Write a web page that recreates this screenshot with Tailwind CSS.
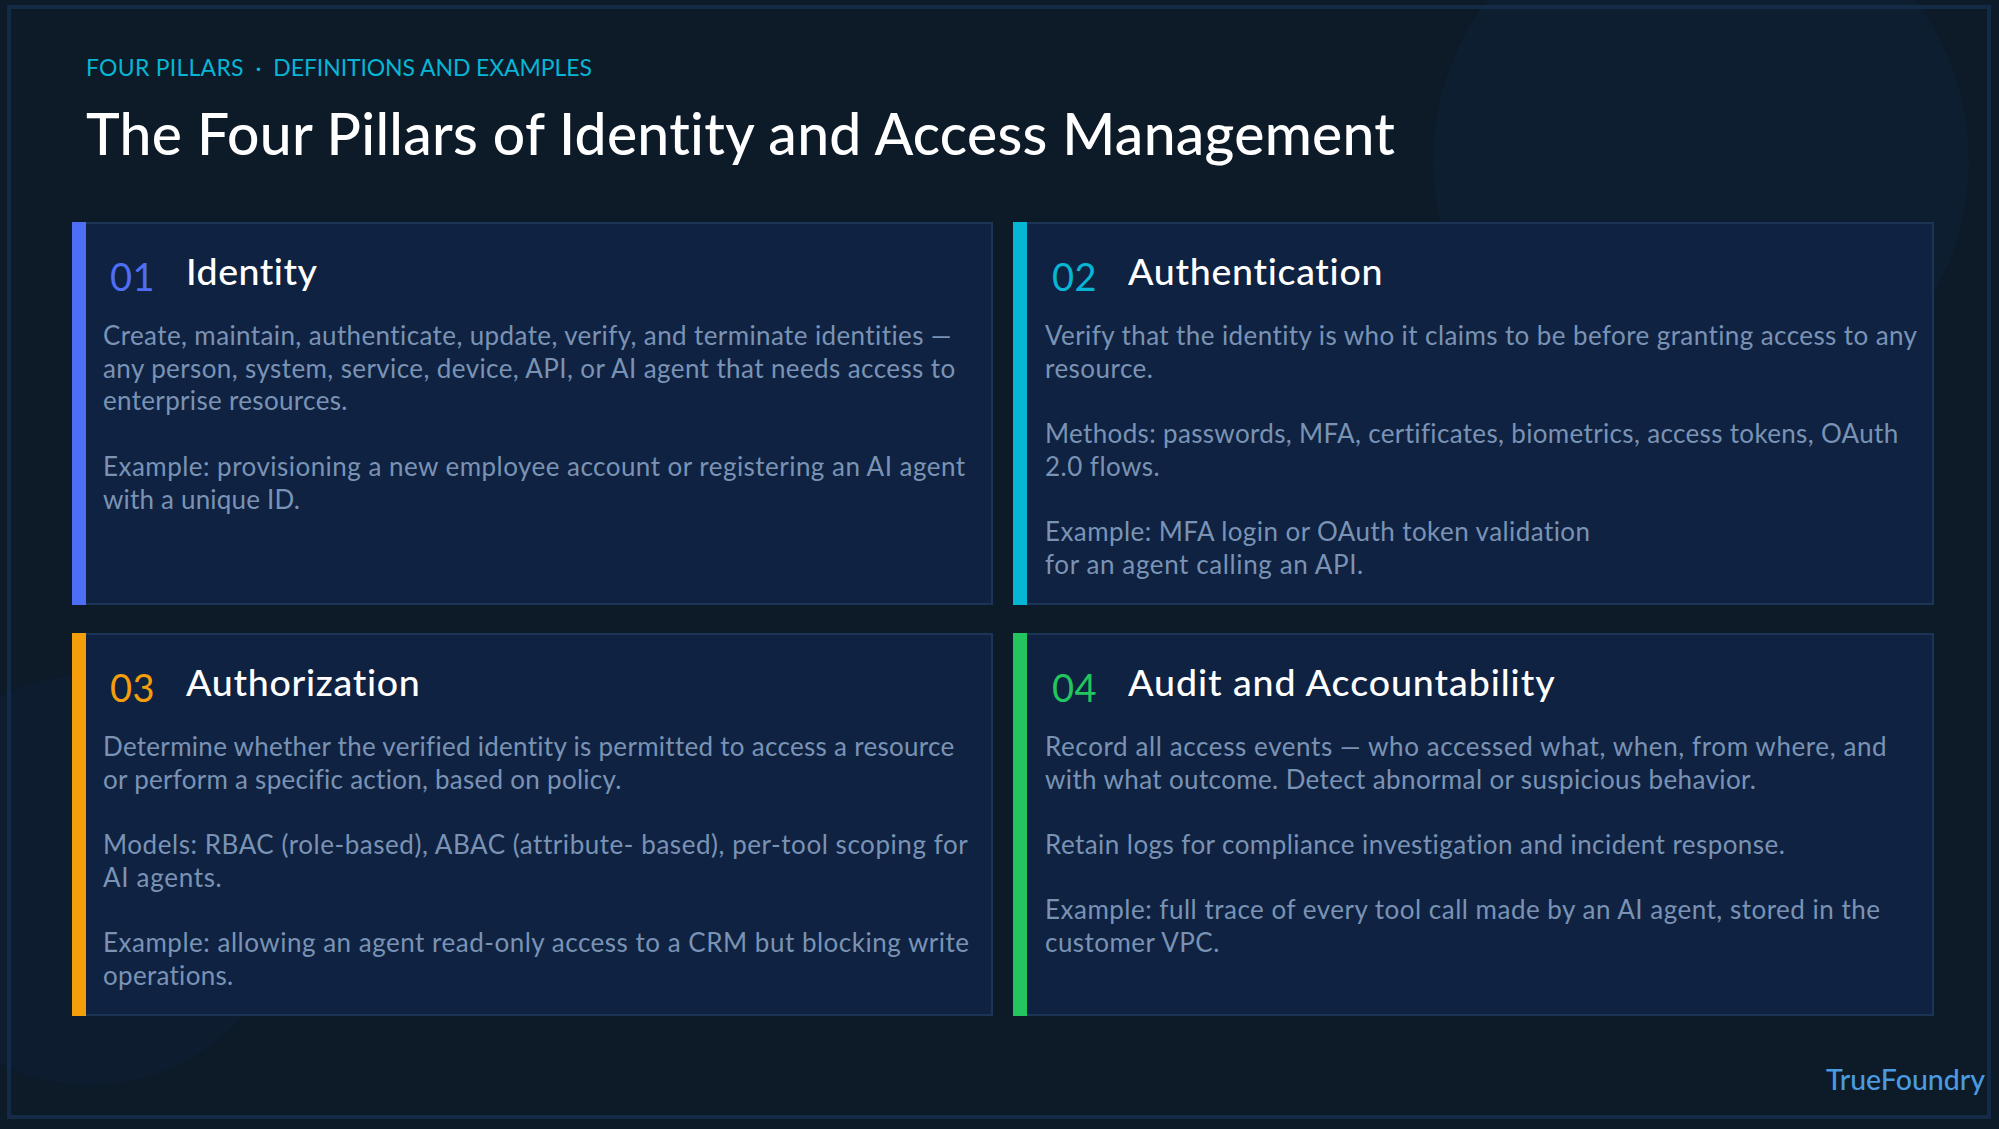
<!DOCTYPE html>
<html lang="en">
<head>
    <meta charset="UTF-8">
    <title>The Four Pillars of Identity and Access Management</title>
    <script src="https://cdn.jsdelivr.net/npm/@tailwindcss/browser@4"></script>
</head>
<body class="bg-[#0d1a28]">
    <div class="relative w-full h-screen overflow-hidden pt-[5px] pl-[7px] pr-[8px] pb-[10px] font-['Lato',sans-serif]">
        <!-- Background circles -->
        <div class="absolute left-[1433px] top-[-107px] w-[536px] h-[536px] rounded-full bg-[#0d1e30]"></div>
        <div class="absolute left-[-115px] top-[675px] w-[410px] h-[410px] rounded-full bg-[#0d1c2e]"></div>

        <!-- Slide frame -->
        <div class="relative h-full border-4 border-[#16304f]/80 flex flex-col">
            <header class="pl-[75px] pt-[42px] h-[213px]">
                <p class="text-[23px] leading-[32px] text-[#06b6d4] whitespace-nowrap"><span class="tracking-[0.25px]">FOUR PILLARS</span> &nbsp;·&nbsp; <span class="tracking-[-0.1px]">DEFINITIONS AND EXAMPLES</span></p>
                <h1 class="mt-[16px] text-[57px] leading-[68px] tracking-[0.3px] font-medium text-white whitespace-nowrap">The Four Pillars of Identity and Access Management</h1>
            </header>

            <!-- Pillar cards -->
            <main class="grid grid-cols-[921px_921px] grid-rows-[383px_383px] gap-x-[20px] gap-y-[28px] pl-[61px]">
                <section class="flex">
                    <div class="w-[14px] bg-[#4f6ef7]"></div>
                    <div class="flex-1 border-2 border-l-0 border-[#1c3557] bg-[#0f2241] pl-[17px] pt-[25px]">
                        <div class="flex items-start">
                            <span class="ml-[7px] mt-[5px] w-[76px] text-[38px] leading-[44px] tracking-[0.5px] text-[#4f6ef7]">01</span>
                            <h2 class="text-[37.5px] leading-[44px] tracking-[0.5px] font-medium text-white">Identity</h2>
                        </div>
                        <div class="mt-[21px] text-[26px] leading-[32.7px] text-[#7a93b5] whitespace-nowrap">
                            <p><span class="block tracking-[0.39px]">Create, maintain, authenticate, update, verify, and terminate identities —</span><span class="block tracking-[0.4px]">any person, system, service, device, API, or AI agent that needs access to</span><span class="block tracking-[0.33px]">enterprise resources.</span></p>
                            <p class="mt-[32.7px]"><span class="block tracking-[0.47px]">Example: provisioning a new employee account or registering an AI agent</span><span class="block tracking-[0.18px]">with a unique ID.</span></p>
                        </div>
                    </div>
                </section>

                <section class="flex">
                    <div class="w-[14px] bg-[#06b6d4]"></div>
                    <div class="flex-1 border-2 border-l-0 border-[#1c3557] bg-[#0f2241] pl-[18px] pt-[25px]">
                        <div class="flex items-start">
                            <span class="ml-[7px] mt-[5px] w-[76px] text-[38px] leading-[44px] tracking-[0.5px] text-[#06b6d4]">02</span>
                            <h2 class="text-[37.5px] leading-[44px] tracking-[0.7px] font-medium text-white">Authentication</h2>
                        </div>
                        <div class="mt-[21px] text-[26px] leading-[32.7px] text-[#7a93b5] whitespace-nowrap">
                            <p><span class="block tracking-[0.41px]">Verify that the identity is who it claims to be before granting access to any</span><span class="block tracking-[0.47px]">resource.</span></p>
                            <p class="mt-[32.7px]"><span class="block tracking-[0.34px]">Methods: passwords, MFA, certificates, biometrics, access tokens, OAuth</span><span class="block tracking-[0.47px]">2.0 flows.</span></p>
                            <p class="mt-[32.7px]"><span class="block tracking-[0.43px]">Example: MFA login or OAuth token validation</span><span class="block tracking-[0.61px]">for an agent calling an API.</span></p>
                        </div>
                    </div>
                </section>

                <section class="flex">
                    <div class="w-[14px] bg-[#f59e0b]"></div>
                    <div class="flex-1 border-2 border-l-0 border-[#1c3557] bg-[#0f2241] pl-[17px] pt-[25px]">
                        <div class="flex items-start">
                            <span class="ml-[7px] mt-[5px] w-[76px] text-[38px] leading-[44px] tracking-[0.5px] text-[#f59e0b]">03</span>
                            <h2 class="text-[37.5px] leading-[44px] tracking-[0.7px] font-medium text-white">Authorization</h2>
                        </div>
                        <div class="mt-[21px] text-[26px] leading-[32.7px] text-[#7a93b5] whitespace-nowrap">
                            <p><span class="block tracking-[0.29px]">Determine whether the verified identity is permitted to access a resource</span><span class="block tracking-[0.27px]">or perform a specific action, based on policy.</span></p>
                            <p class="mt-[32.7px]"><span class="block tracking-[0.55px]">Models: RBAC (role-based), ABAC (attribute- based), per-tool scoping for</span><span class="block tracking-[0.69px]">AI agents.</span></p>
                            <p class="mt-[32.7px]"><span class="block tracking-[0.51px]">Example: allowing an agent read-only access to a CRM but blocking write</span><span class="block tracking-[0.29px]">operations.</span></p>
                        </div>
                    </div>
                </section>

                <section class="flex">
                    <div class="w-[14px] bg-[#22c55e]"></div>
                    <div class="flex-1 border-2 border-l-0 border-[#1c3557] bg-[#0f2241] pl-[18px] pt-[25px]">
                        <div class="flex items-start">
                            <span class="ml-[7px] mt-[5px] w-[76px] text-[38px] leading-[44px] tracking-[0.5px] text-[#22c55e]">04</span>
                            <h2 class="text-[37.5px] leading-[44px] tracking-[0.93px] font-medium text-white">Audit and Accountability</h2>
                        </div>
                        <div class="mt-[21px] text-[26px] leading-[32.7px] text-[#7a93b5] whitespace-nowrap">
                            <p><span class="block tracking-[0.6px]">Record all access events — who accessed what, when, from where, and</span><span class="block tracking-[0.37px]">with what outcome. Detect abnormal or suspicious behavior.</span></p>
                            <p class="mt-[32.7px]"><span class="block tracking-[0.44px]">Retain logs for compliance investigation and incident response.</span></p>
                            <p class="mt-[32.7px]"><span class="block tracking-[0.5px]">Example: full trace of every tool call made by an AI agent, stored in the</span><span class="block tracking-[0.47px]">customer VPC.</span></p>
                        </div>
                    </div>
                </section>
            </main>

            <footer class="absolute right-[2px] bottom-[18px] text-[28.5px] leading-[36px] font-medium text-[#4a9be0]">TrueFoundry</footer>
        </div>
    </div>
</body>
</html>
